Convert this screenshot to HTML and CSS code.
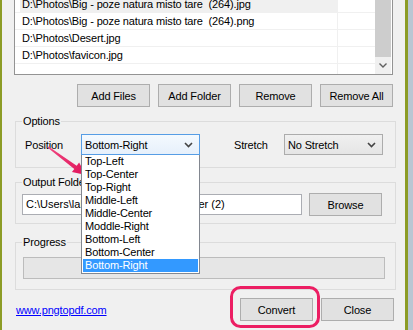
FILE: index.html
```html
<!doctype html>
<html lang="en">
<head>
  <meta charset="UTF-8" />
  <title>PNG to PDF</title>
  <link rel="stylesheet" href="styles.css">
</head>
<body>
  <div class="screen">
    <div class="window">
      <!-- File list -->
      <div class="filelist">
        <div class="rows">
          <div class="row"><span class="cell"><span class="txt active">D:\Photos\Big - poze natura misto tare&nbsp; (264).jpg</span></span><span class="rest"></span></div>
          <div class="row"><span class="cell"><span class="txt">D:\Photos\Big - poze natura misto tare&nbsp; (264).png</span></span><span class="rest"></span></div>
          <div class="row"><span class="cell"><span class="txt">D:\Photos\Desert.jpg</span></span><span class="rest"></span></div>
          <div class="row"><span class="cell"><span class="txt">D:\Photos\favicon.jpg</span></span><span class="rest"></span></div>
          <div class="row"><span class="cell"><span class="txt"></span></span><span class="rest"></span></div>
        </div>
        <div class="vscroll">
          <div class="thumb"></div>
          <div class="down">
            <svg width="8" height="5" viewBox="0 0 8 5"><path d="M0.5 0.5 L4 4 L7.5 0.5" fill="none" stroke="#606060" stroke-width="1.4"/></svg>
          </div>
        </div>
      </div>

      <div class="list-buttons">
        <button class="btn">Add Files</button>
        <button class="btn">Add Folder</button>
        <button class="btn">Remove</button>
        <button class="btn">Remove All</button>
      </div>

      <!-- Options -->
      <fieldset class="group group-options">
        <legend>Options</legend>
        <div class="options-row">
          <span class="lbl lbl-position">Position</span>
          <div class="combo combo-open">
            <span class="combo-text">Bottom-Right</span>
            <svg class="chev" width="9" height="6" viewBox="0 0 9 6"><path d="M1 1 L4.5 4.5 L8 1" fill="none" stroke="#444" stroke-width="1.6"/></svg>
            <ul class="droplist">
              <li>Top-Left</li>
              <li>Top-Center</li>
              <li>Top-Right</li>
              <li>Middle-Left</li>
              <li>Middle-Center</li>
              <li>Moddle-Right</li>
              <li>Bottom-Left</li>
              <li>Bottom-Center</li>
              <li class="selected">Bottom-Right</li>
            </ul>
          </div>
          <span class="lbl lbl-stretch">Stretch</span>
          <div class="combo combo-stretch">
            <span class="combo-text">No Stretch</span>
            <svg class="chev" width="9" height="6" viewBox="0 0 9 6"><path d="M1 1 L4.5 4.5 L8 1" fill="none" stroke="#444" stroke-width="1.6"/></svg>
          </div>
        </div>
      </fieldset>

      <!-- Output folder -->
      <fieldset class="group group-output">
        <legend>Output Folder</legend>
        <div class="output-row">
          <div class="textbox">C:\Users\lakshmi\Desktop\New folder (2)</div>
          <button class="btn">Browse</button>
        </div>
      </fieldset>

      <!-- Progress -->
      <fieldset class="group group-progress">
        <legend>Progress</legend>
        <div class="progress"></div>
      </fieldset>

      <div class="footer-row">
        <a href="#" class="site-link">www.pngtopdf.com</a>
        <div class="footer-buttons">
          <button class="btn">Convert</button>
          <button class="btn">Close</button>
        </div>
      </div>
    </div>
    <div class="edge"></div>

    <!-- Callout marks drawn over the dialog -->
    <svg class="callouts" width="413" height="330" viewBox="0 0 413 330">
      <defs>
        <linearGradient id="arrowGrad" x1="48" y1="147" x2="86" y2="175" gradientUnits="userSpaceOnUse">
          <stop offset="0" stop-color="#f0467f"/>
          <stop offset="1" stop-color="#e0145a"/>
        </linearGradient>
      </defs>
      <polygon points="48.5,146.4 76.7,165.7 79.1,162.5 86,175 71.9,172.1 74.3,168.9 47.5,147.6" fill="url(#arrowGrad)"/>
      <rect x="231.5" y="287.5" width="87" height="39" rx="9" ry="9" fill="none" stroke="#ec1e63" stroke-width="3"/>
    </svg>
  </div>
</body>
</html>
```

FILE: styles.css
```css
/* ------------------ Reset & Globals ------------------ */
* {
  margin: 0;
  padding: 0;
  box-sizing: border-box;
}
body {
  font-family: "Liberation Sans", Arial, sans-serif;
  font-size: 11px;
  letter-spacing: -0.15px;
  color: #000;
  background: #f0f0f0;
  overflow: hidden;
}
ul {
  list-style: none;
}

/* ------------------ Window frame ------------------ */
.screen {
  position: relative;
  display: flex;
  width: 413px;
  height: 330px;
}
.window {
  width: 408px;
  height: 330px;
  background: #f0f0f0;
  border-left: 2px solid #8c9c26;
  border-right: 3px solid #8c9c26;
}
.edge {
  width: 5px;
  background: #b9c6d3;
}
.callouts {
  position: absolute;
  left: 0;
  top: 0;
  pointer-events: none;
}

/* ------------------ Buttons ------------------ */
.btn {
  width: 73px;
  height: 23px;
  border: 1px solid #adadad;
  background: #e1e1e1;
  font-family: inherit;
  font-size: 11px;
  letter-spacing: -0.15px;
  color: #000;
}

/* ------------------ File list ------------------ */
.filelist {
  display: flex;
  width: 379px;
  height: 75px;
  margin-left: 12px;
  background: #fff;
  border: 1px solid #939393;
  border-top: none;
  overflow: hidden;
}
.rows {
  flex: 1;
  margin-top: -4px;
}
.row {
  display: flex;
  height: 17px;
  border-bottom: 1px solid #f0f0f0;
}
.cell {
  width: 323px;
  padding-left: 5px;
  border-right: 1px solid #f0f0f0;
}
.txt {
  display: block;
  height: 16px;
  line-height: 16px;
  padding-left: 2px;
  white-space: pre;
}
.txt.active {
  background: #f0f0f0;
}
.rest {
  flex: 1;
}
.vscroll {
  width: 17px;
  display: flex;
  flex-direction: column;
  background: #f0f0f0;
  border-right: 1px solid #fff;
}
.thumb {
  height: 57px;
  background: #cdcdcd;
}
.down {
  flex: 1;
  display: flex;
  align-items: center;
  justify-content: center;
}
.list-buttons {
  display: flex;
  justify-content: flex-end;
  gap: 8px;
  margin-top: 9px;
  padding-right: 12px;
}

/* ------------------ Group boxes ------------------ */
.group {
  width: 381px;
  margin-left: 13px;
  border: 1px solid #dcdcdc;
  min-width: 0;
}
.group legend {
  margin-left: 6px;
  padding: 0 1px;
  line-height: 14px;
}
.group-options {
  margin-top: 7px;
  padding-bottom: 12px;
}
.group-output {
  margin-top: 7px;
  padding-bottom: 7px;
}
.group-progress {
  margin-top: 11px;
  padding-bottom: 10px;
}

/* Options */
.options-row {
  display: flex;
  align-items: center;
  margin-top: 6px;
  padding-left: 9px;
}
.lbl-position {
  width: 56px;
}
.lbl-stretch {
  width: 50px;
  margin-left: 34px;
}
.combo {
  position: relative;
  display: flex;
  align-items: center;
  justify-content: space-between;
  height: 21px;
  padding: 0 6px 0 3px;
  border: 1px solid #acacac;
  background: linear-gradient(#f0f0f0, #e5e5e5);
}
.combo-open {
  width: 119px;
  border-color: #569de5;
  background: linear-gradient(#f4f9fe, #e6f0fb);
}
.combo-stretch {
  width: 99px;
}
.droplist {
  position: absolute;
  left: -1px;
  top: calc(100% + 1px);
  width: 119px;
  padding: 0 1px 1px;
  background: #fff;
  border: 1px solid #828790;
  border-top: none;
  z-index: 2;
}
.droplist li {
  height: 13px;
  line-height: 13px;
  padding-left: 2px;
}
.droplist li.selected {
  background: #3399ff;
  color: #fff;
}

/* Output folder */
.output-row {
  display: flex;
  align-items: center;
  gap: 7px;
  margin-top: 4px;
  padding-left: 6px;
}
.textbox {
  width: 280px;
  height: 21px;
  line-height: 19px;
  padding-left: 3px;
  background: #fff;
  border: 1px solid #abadb3;
  white-space: nowrap;
  overflow: hidden;
  letter-spacing: 0;
}

/* Progress */
.progress {
  width: 362px;
  height: 22px;
  margin-top: 8px;
  margin-left: 7px;
  background: #e6e6e6;
  border: 1px solid #bcbcbc;
}

/* ------------------ Footer ------------------ */
.footer-row {
  display: flex;
  align-items: center;
  justify-content: space-between;
  margin-top: 8px;
  padding: 0 11px 0 14px;
}
.site-link {
  color: #0000ff;
  text-decoration: underline;
}
.footer-buttons {
  display: flex;
  gap: 8px;
}
```
